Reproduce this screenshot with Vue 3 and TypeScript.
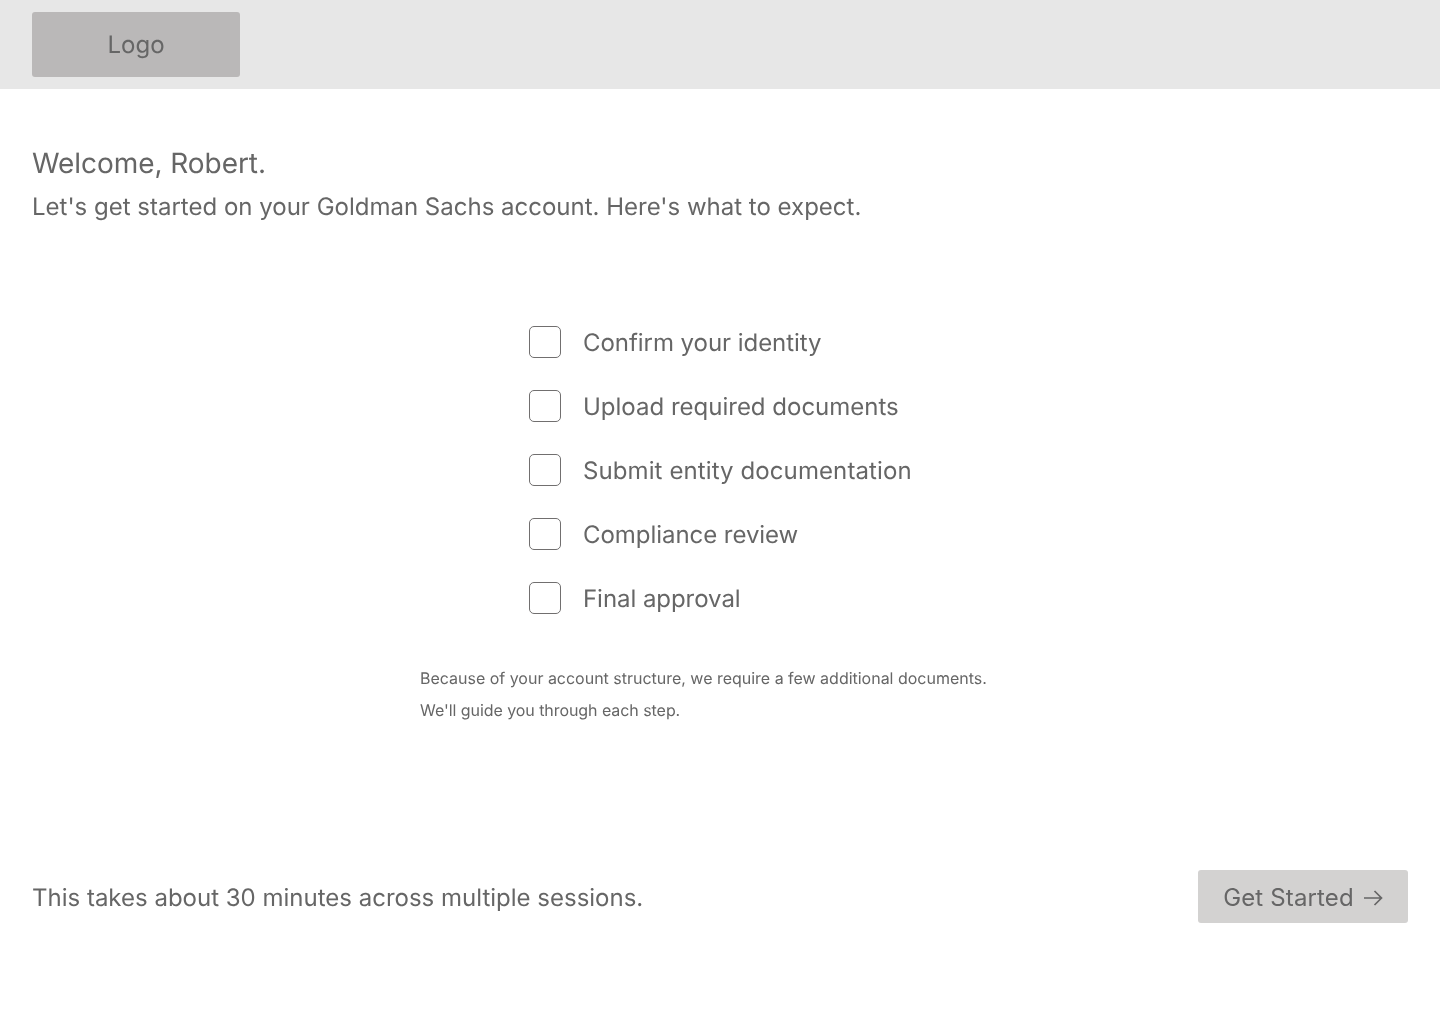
<script setup lang="ts">
const steps: string[] = [
  'Confirm your identity',
  'Upload required documents',
  'Submit entity documentation',
  'Compliance review',
  'Final approval',
]
</script>

<template>
  <div class="page">
    <header class="top">
      <div class="logo">Logo</div>
    </header>
    <main class="main">
      <h1 class="title">Welcome, Robert.</h1>
      <p class="sub">Let's get started on your Goldman Sachs account. Here's what to expect.</p>
      <ul class="steps">
        <li v-for="s in steps" :key="s" class="step">
          <span class="box"></span>
          <span class="label">{{ s }}</span>
        </li>
      </ul>
      <div class="note">
        <p>Because of your account structure, we require a few additional documents.</p>
        <p>We'll guide you through each step.</p>
      </div>
      <div class="foot">
        <span class="time">This takes about 30 minutes across multiple sessions.</span>
        <button class="cta" type="button">
          <span>Get Started</span>
          <svg width="20" height="20" viewBox="0 0 20 20" fill="none" stroke="#666666" stroke-width="1.7">
            <path d="M1 10H18.5M11.5 3 18.5 10l-7 7" />
          </svg>
        </button>
      </div>
    </main>
  </div>
</template>

<style>
html, body { margin: 0; background: #fff; }
</style>

<style scoped>
.page { min-height: 1024px; font-family: Inter, sans-serif; color: #666666; font-weight: 400; will-change: transform; text-rendering: geometricPrecision; }
.top { background: #e7e7e7; height: 89px; box-sizing: border-box; padding: 12px 32px; }
.logo { width: 208px; height: 65px; background: #bab8b8; border-radius: 3px; display: flex; align-items: center; justify-content: center; font-size: 24px; }
.main { padding: 0 32px; }
.title { margin: 0; padding-top: 56px; font-size: 28px; line-height: 36px; font-weight: 400; letter-spacing: -0.06px; }
.sub { margin: 8px 0 0; font-size: 24px; line-height: 36px; }
.steps { list-style: none; margin: 0; padding: 101px 0 0 497px; display: flex; flex-direction: column; gap: 32px; }
.step { display: flex; align-items: center; gap: 22px; height: 32px; font-size: 24px; letter-spacing: -0.05px; }
.step:nth-child(2) { letter-spacing: 0; }
.step:nth-child(3) { letter-spacing: 0.1px; }
.box { width: 32px; height: 32px; box-sizing: border-box; border: 1px solid #716f6f; border-radius: 5px; }
.note { margin: 48px 0 0 388px; font-size: 16px; line-height: 32px; letter-spacing: -0.013px; }
.note p { margin: 0; }
.note p:last-child { letter-spacing: -0.06px; }
.foot { margin-top: 144px; display: flex; align-items: center; justify-content: space-between; }
.time { font-size: 24px; padding-top: 2px; }
.cta { width: 210px; height: 53px; background: #d3d2d1; border: 0; border-radius: 3px; color: inherit; font: inherit; font-size: 24px; letter-spacing: 0.15px; display: flex; align-items: center; justify-content: center; gap: 9px; padding: 2px 0 0; }
</style>
